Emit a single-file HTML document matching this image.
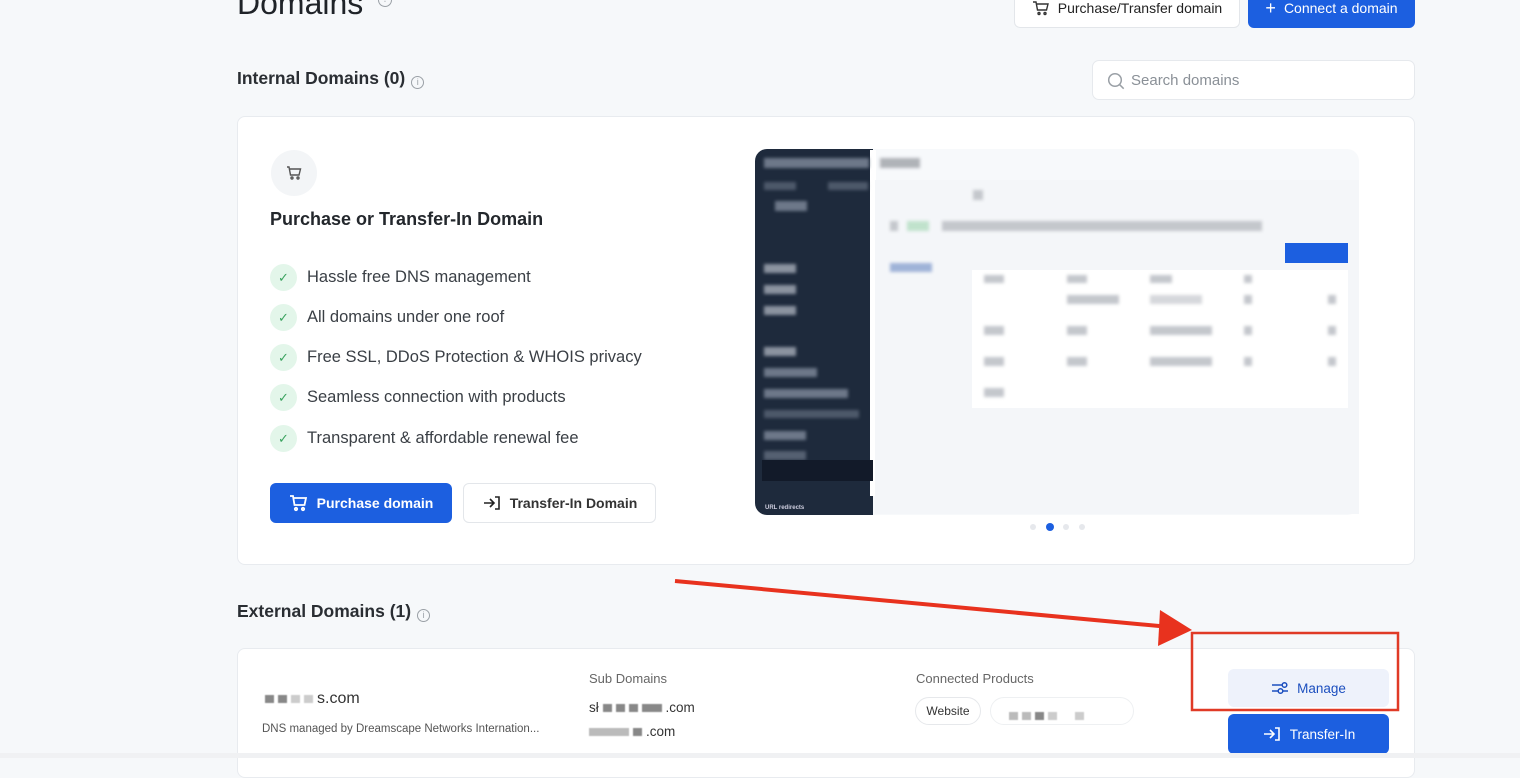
<!DOCTYPE html>
<html><head><meta charset="utf-8"><style>
*{box-sizing:border-box;margin:0;padding:0}
body{width:1520px;height:758px;overflow:hidden;background:#f6f8fa;font-family:"Liberation Sans",sans-serif;color:#1f2328;position:relative}
.a{position:absolute}
.btn{position:absolute;border-radius:6px;font-size:14px;display:flex;align-items:center;justify-content:center;gap:8px}
.wb{background:#fff;border:1px solid #e3e6ea;color:#222}
.bb{background:#1c5fe0;color:#fff;font-weight:bold}
.card{position:absolute;background:#fff;border:1px solid #e8ebef;border-radius:8px}
.h2{font-size:17.5px;font-weight:bold;color:#2a2e33}
.info{display:inline-block;width:13px;height:13px;border:1px solid #9aa0a6;border-radius:50%;vertical-align:-1px;margin-left:6px;font-size:9px;line-height:11px;text-align:center;color:#9aa0a6;font-weight:normal}
.li{position:absolute;left:270px;display:flex;align-items:center;font-size:16.5px;color:#3a3f45}
.ck{width:27px;height:27px;border-radius:50%;background:#e3f6ea;color:#3aa35f;font-size:13px;display:flex;align-items:center;justify-content:center;margin-right:10px}
.g{position:absolute;background:#c4c7cc;filter:blur(1.5px)}
.s{position:absolute;background:#6d7889;filter:blur(1.5px)}
.px{display:inline-block;width:9px;height:8px;background:#888;margin-right:4px;filter:blur(.6px)}
</style></head><body>
<div class="a" style="left:237px;top:-15px;font-size:32px;color:#1f2328">Domains <span class="info" style="width:14px;height:14px;vertical-align:12px">?</span></div>
<div class="btn wb" style="left:1014px;top:-12px;width:226px;height:40px;font-size:14px">
<svg width="18" height="16" viewBox="0 0 18 16" fill="none" stroke="#333" stroke-width="1.4"><path d="M1 2h3l1.5 8h9l1.5-6H5"/><circle cx="7" cy="13.5" r="1"/><circle cx="13" cy="13.5" r="1"/></svg>Purchase/Transfer domain</div>
<div class="btn bb" style="left:1248px;top:-12px;width:167px;height:40px;font-weight:normal"><span style="font-size:18px">+</span> Connect a domain</div>

<div class="a h2" style="left:237px;top:68px">Internal Domains (0)<span class="info">i</span></div>
<div class="a" style="left:1092px;top:60px;width:323px;height:40px;background:#fff;border:1px solid #e6e9ed;border-radius:7px;color:#8a9097;font-size:15px;padding:11px 0 0 38px">Search domains
<svg class="a" style="left:14px;top:11px" width="18" height="18" viewBox="0 0 18 18" fill="none" stroke="#9aa0a6" stroke-width="1.5"><circle cx="8" cy="8" r="6.3"/><path d="M12.7 12.7l4 4"/></svg></div>

<div class="card" style="left:237px;top:116px;width:1178px;height:449px"></div>
<div class="a" style="left:271px;top:150px;width:46px;height:46px;border-radius:50%;background:#f3f5f7"></div>
<svg class="a" style="left:285px;top:164px" width="18" height="18" viewBox="0 0 18 18" fill="none" stroke="#555" stroke-width="1.4"><path d="M2 3h2l1.5 8h8.5l1.5-6H5"/><circle cx="7" cy="14" r="1"/><circle cx="13" cy="14" r="1"/></svg>
<div class="a" style="left:270px;top:209px;font-size:18px;font-weight:bold;color:#23272c">Purchase or Transfer-In Domain</div>
<div class="li" style="top:264px"><span class="ck">✓</span>Hassle free DNS management</div>
<div class="li" style="top:304px"><span class="ck">✓</span>All domains under one roof</div>
<div class="li" style="top:344px"><span class="ck">✓</span>Free SSL, DDoS Protection &amp; WHOIS privacy</div>
<div class="li" style="top:384px"><span class="ck">✓</span>Seamless connection with products</div>
<div class="li" style="top:425px"><span class="ck">✓</span>Transparent &amp; affordable renewal fee</div>
<div class="btn bb" style="left:270px;top:483px;width:182px;height:40px">
<svg width="20" height="18" viewBox="0 0 20 18" fill="none" stroke="#fff" stroke-width="1.8"><path d="M1 2h3l1.5 9h10l1.5-7H5"/><circle cx="7" cy="15" r="1.2"/><circle cx="14" cy="15" r="1.2"/></svg>Purchase domain</div>
<div class="btn wb" style="left:463px;top:483px;width:193px;height:40px;font-weight:bold;color:#333">
<svg width="20" height="16" viewBox="0 0 20 16" fill="none" stroke="#222" stroke-width="1.6"><path d="M2 8h10M8 4l4 4-4 4M13 2h4v12h-4"/></svg>Transfer-In Domain</div>

<!-- mockup -->
<div class="a" style="left:755px;top:149px;width:118px;height:366px;background:#1e2a3c;border-radius:12px 0 0 12px"></div>
<div class="a" style="left:873px;top:149px;width:486px;height:366px;background:#f7f9fb;border-radius:0 12px 12px 0"></div>
<div class="a" style="left:870px;top:150px;width:6px;height:346px;background:#fff"></div>
<div class="s" style="left:764px;top:158px;width:105px;height:10px"></div>
<div class="s" style="left:764px;top:182px;width:32px;height:8px;opacity:.6"></div>
<div class="s" style="left:828px;top:182px;width:40px;height:8px;opacity:.6"></div>
<div class="s" style="left:775px;top:201px;width:32px;height:10px"></div>
<div class="s" style="left:764px;top:264px;width:32px;height:9px;background:#8b93a0"></div>
<div class="s" style="left:764px;top:285px;width:32px;height:9px;background:#8b93a0"></div>
<div class="s" style="left:764px;top:306px;width:32px;height:9px;background:#8b93a0"></div>
<div class="s" style="left:764px;top:347px;width:32px;height:9px;background:#8b93a0"></div>
<div class="s" style="left:764px;top:368px;width:53px;height:9px"></div>
<div class="s" style="left:764px;top:389px;width:84px;height:9px"></div>
<div class="s" style="left:764px;top:410px;width:95px;height:8px;opacity:.6"></div>
<div class="s" style="left:764px;top:431px;width:42px;height:9px"></div>
<div class="s" style="left:764px;top:451px;width:42px;height:9px;opacity:.7"></div>
<div class="a" style="left:762px;top:460px;width:111px;height:21px;background:#121a29"></div>
<div class="a" style="left:765px;top:505px;font-size:6px;color:#ccd;font-weight:bold">URL redirects</div>
<div class="g" style="left:880px;top:158px;width:40px;height:10px;background:#b0b3b8"></div>
<div class="a" style="left:875px;top:180px;width:484px;height:334px;background:#f4f6f9"></div>
<div class="g" style="left:890px;top:221px;width:8px;height:10px"></div>
<div class="g" style="left:907px;top:221px;width:22px;height:10px;background:#c0e2cc"></div>
<div class="g" style="left:942px;top:221px;width:320px;height:10px"></div>
<div class="g" style="left:973px;top:190px;width:10px;height:10px"></div>
<div class="a" style="left:1285px;top:243px;width:63px;height:20px;background:#1c5fe0"></div>
<div class="g" style="left:890px;top:263px;width:42px;height:9px;background:#9fb3d8"></div>
<div class="a" style="left:972px;top:270px;width:376px;height:138px;background:#fff"></div>
<div class="g" style="left:984px;top:275px;width:20px;height:8px"></div><div class="g" style="left:1067px;top:275px;width:20px;height:8px"></div><div class="g" style="left:1150px;top:275px;width:22px;height:8px"></div><div class="g" style="left:1244px;top:275px;width:8px;height:8px"></div>
<div class="g" style="left:1067px;top:295px;width:52px;height:9px"></div><div class="g" style="left:1150px;top:295px;width:52px;height:9px;opacity:.7"></div><div class="g" style="left:1244px;top:295px;width:8px;height:9px"></div><div class="g" style="left:1328px;top:295px;width:8px;height:9px"></div>
<div class="g" style="left:984px;top:326px;width:20px;height:9px"></div><div class="g" style="left:1067px;top:326px;width:20px;height:9px"></div><div class="g" style="left:1150px;top:326px;width:62px;height:9px"></div><div class="g" style="left:1244px;top:326px;width:8px;height:9px"></div><div class="g" style="left:1328px;top:326px;width:8px;height:9px"></div>
<div class="g" style="left:984px;top:357px;width:20px;height:9px"></div><div class="g" style="left:1067px;top:357px;width:20px;height:9px"></div><div class="g" style="left:1150px;top:357px;width:62px;height:9px"></div><div class="g" style="left:1244px;top:357px;width:8px;height:9px"></div><div class="g" style="left:1328px;top:357px;width:8px;height:9px"></div>
<div class="g" style="left:984px;top:388px;width:20px;height:9px"></div>
<div class="a" style="left:1030px;top:524px;width:6px;height:6px;border-radius:50%;background:#e6e8ec"></div>
<div class="a" style="left:1046px;top:523px;width:8px;height:8px;border-radius:50%;background:#1c5fe0"></div>
<div class="a" style="left:1063px;top:524px;width:6px;height:6px;border-radius:50%;background:#e6e8ec"></div>
<div class="a" style="left:1079px;top:524px;width:6px;height:6px;border-radius:50%;background:#e6e8ec"></div>

<div class="a h2" style="left:237px;top:601px">External Domains (1)<span class="info">i</span></div>
<div class="card" style="left:237px;top:648px;width:1178px;height:130px"></div>
<div class="a" style="left:265px;top:690px;font-size:16px;color:#333"><span class="px"></span><span class="px"></span><span class="px" style="background:#ccc"></span><span class="px" style="background:#ccc"></span>s.com</div>
<div class="a" style="left:262px;top:723px;font-size:11.5px;color:#555">DNS managed by Dreamscape Networks Internation...</div>
<div class="a" style="left:589px;top:671px;font-size:13px;color:#666">Sub Domains</div>
<div class="a" style="left:589px;top:700px;font-size:13.5px;color:#333">sł <span class="px"></span><span class="px"></span><span class="px"></span><span class="px" style="width:20px"></span>.com</div>
<div class="a" style="left:589px;top:724px;font-size:13.5px;color:#333"><span class="px" style="width:40px;background:#bbb"></span><span class="px"></span>.com</div>
<div class="a" style="left:916px;top:671px;font-size:13px;color:#666">Connected Products</div>
<div class="a" style="left:915px;top:697px;width:66px;height:28px;border:1px solid #e6e8eb;border-radius:14px;font-size:12px;color:#333;text-align:center;line-height:26px">Website</div>
<div class="a" style="left:990px;top:697px;width:144px;height:28px;border:1px solid #eef0f2;border-radius:14px;padding:9px 0 0 18px"><span class="px" style="background:#bbb"></span><span class="px" style="background:#bbb"></span><span class="px"></span><span class="px" style="background:#ccc"></span><span class="px" style="background:#ccc;margin-left:14px"></span></div>
<div class="btn" style="left:1228px;top:669px;width:161px;height:38px;background:#eef2fb;color:#1c4fbf;font-size:13.5px">
<svg width="18" height="14" viewBox="0 0 18 14" fill="none" stroke="#1c4fbf" stroke-width="1.5"><path d="M1 4h10M1 10h6"/><circle cx="13.5" cy="4" r="2.3"/><circle cx="9.5" cy="10" r="2.3"/><path d="M12 10h5"/></svg>Manage</div>
<div class="btn bb" style="left:1228px;top:714px;width:161px;height:40px;font-weight:normal;font-size:13.5px">
<svg width="20" height="16" viewBox="0 0 20 16" fill="none" stroke="#fff" stroke-width="1.6"><path d="M2 8h10M8 4l4 4-4 4M13 2h4v12h-4"/></svg>Transfer-In</div>

<!-- annotation -->
<svg class="a" style="left:0;top:0" width="1520" height="758">
<line x1="675" y1="581" x2="1170" y2="627" stroke="#e8321e" stroke-width="4"/>
<polygon points="1192,630 1160,610 1158,646" fill="#e8321e"/>
<rect x="1192" y="633" width="206" height="77" fill="none" stroke="#e03a26" stroke-width="2.5"/>
</svg>
<div class="a" style="left:0;top:753px;width:1520px;height:5px;background:#f0f1f3"></div>
</body></html>
